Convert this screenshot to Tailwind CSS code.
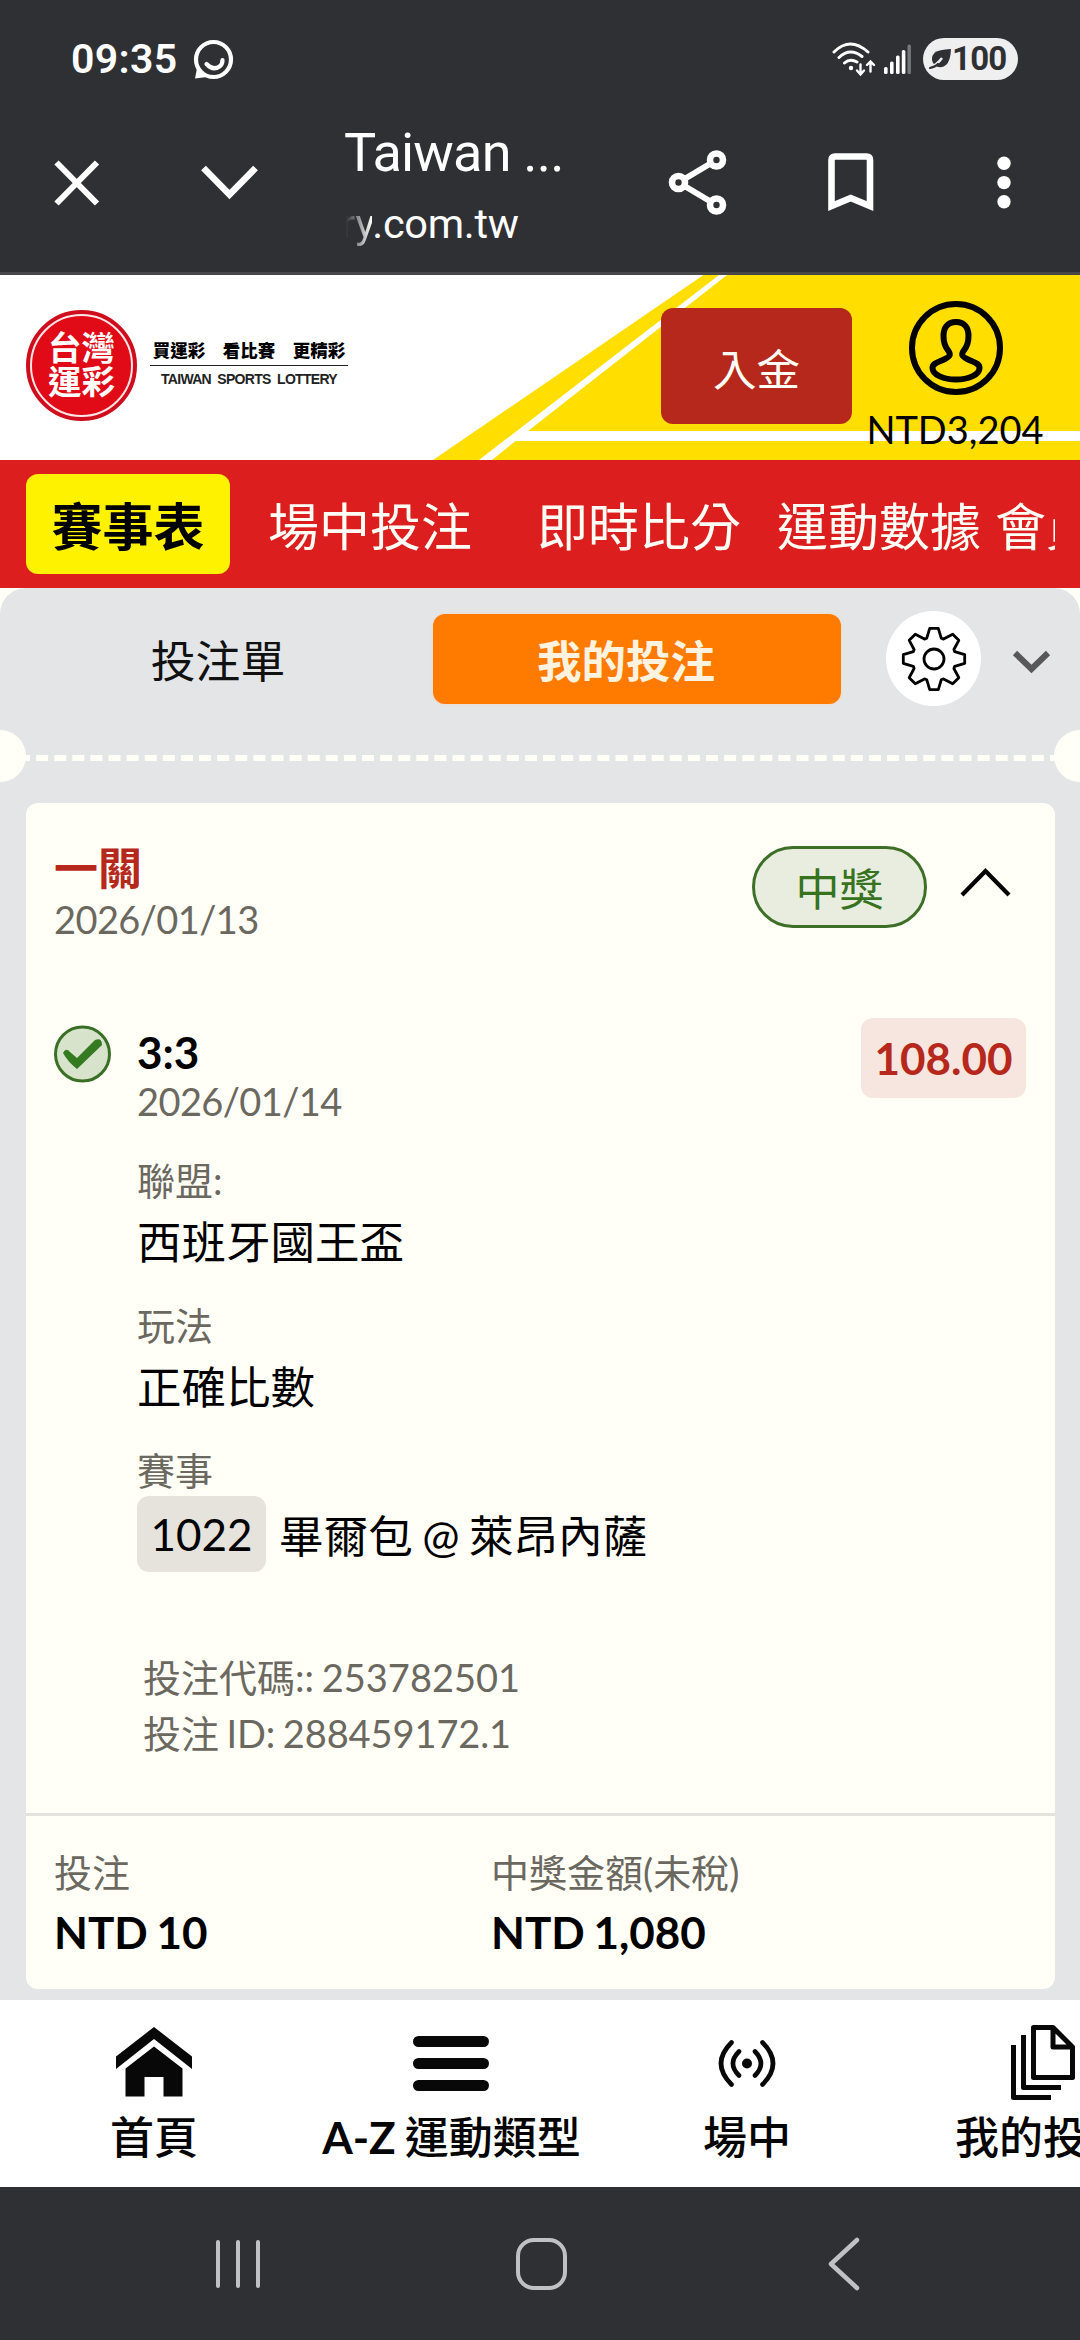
<!DOCTYPE html>
<html lang="zh-Hant">
<head>
<meta charset="utf-8">
<title>台灣運彩</title>
<script src="https://cdn.jsdelivr.net/npm/@tailwindcss/browser@4"></script>
</head>
<body class="w-[1080px] h-[2340px] overflow-hidden flex flex-col bg-[#2f3034] text-black font-['Lato','Noto_Sans_CJK_TC',sans-serif] whitespace-nowrap">

<!-- Status bar -->
<div class="h-[118px] shrink-0 flex items-center pl-[71px] pr-[62px] text-white font-['Roboto',sans-serif]">
  <span class="text-[41px] font-semibold leading-[50px] tracking-[0.300px]">09:35</span>
  <svg class="ml-[16px] mt-[2px]" width="42" height="42" viewBox="0 0 42 42" fill="none" stroke="#fff" stroke-linecap="round"><circle cx="20.500" cy="20.500" r="17.500" stroke-width="4.200"/><path d="M4 29L2 39.500L14 38z" fill="#fff" stroke="none"/><path d="M13.500 25Q20 32 26.500 27.500Q29.500 25.500 29.500 21" stroke-width="4.200"/></svg>
  <div class="ml-auto flex items-center">
    <svg class="mr-[8px]" width="44" height="36" viewBox="0 0 44 36" fill="none" stroke="#fff" stroke-width="3" stroke-linecap="round"><path d="M2 11Q18-5 36 11M7 16.500Q18 6 30 15.500M12.500 22Q18 17 25 21"/><circle cx="19" cy="27" r="2.200" fill="#fff" stroke="none"/><path d="M28.500 23.500V33M25 29.500L28.500 33.500L32 29.500M38.500 30.500V21M35 24L38.500 20.500L42 24" stroke-width="2.400"/></svg>
    <svg class="mr-[11px]" width="28" height="32" viewBox="0 0 28 32" fill="#fff"><rect x="0" y="24" width="3.600" height="7" rx="1.500"/><rect x="6" y="18.500" width="3.600" height="12.500" rx="1.500"/><rect x="12" y="12.500" width="3.600" height="18.500" rx="1.500"/><rect x="17.800" y="7" width="3.600" height="24" rx="1.500"/><rect x="23.500" y="1.500" width="3.400" height="29.500" rx="1.500" fill="#77787b"/></svg>
    <div class="w-[95px] h-[42px] rounded-full bg-[#efeff0] flex items-center pl-[6px] text-[#2f3034]">
      <svg width="23" height="22" viewBox="0 0 23 22"><path d="M22 1Q21.500 13 17 17Q12 21 7 18L4 15Q1 9 6 4.500Q9.500 1.500 22 1z" fill="#2f3034"/><path d="M0 20Q8 17 13 10" fill="none" stroke="#efeff0" stroke-width="2.500"/><path d="M1 20Q7 18.500 9 16" fill="none" stroke="#2f3034" stroke-width="2.200" stroke-linecap="round"/></svg>
      <span class="text-[33px] font-bold leading-[42px] tracking-[-0.800px]">100</span>
    </div>
  </div>
</div>

<!-- Browser toolbar -->
<div class="h-[154px] shrink-0 flex text-white font-['Roboto',sans-serif]">
  <svg class="ml-[53px] mt-[41px]" width="48" height="48" viewBox="0 0 48 48" stroke="#fff" stroke-width="6"><path d="M3.500 3.500L44 44.500M44 3.500L3.500 44.500"/></svg>
  <svg class="ml-[98px] mt-[45px]" width="62" height="40" viewBox="0 0 62 40" fill="none" stroke="#fff" stroke-width="6.600"><path d="M4.500 5L30.500 31.500L56.500 5"/></svg>
  <div class="ml-[83px] w-[220px] h-[154px]">
    <div class="mt-[2px] h-[66px] leading-[66px] text-[54px] tracking-[-0.800px]">Taiwan ...</div>
    <div class="mt-[8px] -ml-[3px] h-[60px] leading-[60px] text-[41.500px] tracking-[-0.300px]"><span class="bg-linear-to-r from-transparent from-[15%] to-white bg-clip-text text-transparent">ry</span>.com.tw</div>
  </div>
  <svg class="ml-[104px] mt-[32px]" width="60" height="66" viewBox="0 0 60 66" fill="none" stroke="#fff" stroke-width="6"><circle cx="10.500" cy="32.500" r="6.500" stroke-width="6.600"/><circle cx="48.500" cy="10" r="6.500" stroke-width="6.600"/><circle cx="48.500" cy="55" r="6.500" stroke-width="6.600"/><path d="M16.500 29L42.500 13.500M16.500 36L42.500 51.500"/></svg>
  <svg class="ml-[100px] mt-[35px]" width="46" height="60" viewBox="0 0 46 60" fill="none" stroke="#fff" stroke-width="6.600"><path d="M3.500 53V7Q3.500 3.500 7 3.500H38.500Q42 3.500 42 7V53L22.700 45z"/></svg>
  <svg class="ml-[123px] mt-[38px]" width="14" height="54" viewBox="0 0 14 54" fill="#fff"><circle cx="7" cy="7.300" r="6.700"/><circle cx="7" cy="26.600" r="6.700"/><circle cx="7" cy="45.800" r="6.700"/></svg>
</div>
<div class="h-[3px] shrink-0 bg-[#48484a]"></div>

<!-- Site header -->
<header class="relative h-[185px] shrink-0 bg-white flex">
  <svg class="absolute inset-0" width="1080" height="185" viewBox="0 275 1080 185" fill="#ffde00"><path d="M703.500 275L433 460H479L719 275zM727 275L528 431H1080V275zM515.500 441L492 460H1080V441z"/></svg>
  <div class="relative ml-[26px] mt-[35px] size-[111px] rounded-full bg-[#e10a17] border-[4px] border-[#d00d1c] flex">
    <div class="size-full rounded-full border-2 border-white/90 pt-[14px] text-center text-white font-bold text-[33.500px] leading-[34px]">台灣<br>運彩</div>
  </div>
  <div class="relative ml-[13px] mt-[63px] w-[198px] text-center">
    <div class="h-[28px] border-b border-[#222] text-[17.500px] leading-[26px] font-black">買運彩　看比賽　更精彩</div>
    <div class="mt-[3px] text-[14px] leading-[20px] font-bold text-[#222] font-['Liberation_Sans'] tracking-[-0.700px]">TAIWAN&nbsp; SPORTS&nbsp; LOTTERY</div>
  </div>
  <div class="relative ml-[313px] mt-[33px] w-[191px] h-[116px] rounded-[12px] bg-[#b6281b] text-[#fffff7] text-center text-[43.500px] leading-[122px]">入金</div>
  <div class="relative ml-[14px] mt-[26px] w-[178px] flex flex-col items-center">
    <svg class="ml-[2px]" width="94" height="94" viewBox="0 0 94 94" fill="none" stroke="#000" stroke-width="6"><circle cx="47" cy="47" r="44"/><path d="M47 21C38 21 34.500 27 34.500 35C34.500 42 36 46 39.500 50C42.500 54 40 56 36 58C29 61.500 23.500 62 23.500 67C23.500 74 35 78.500 47 78.500S70.500 74 70.500 67C70.500 62 65 61.500 58 58C54 56 51.500 54 54.500 50C58 46 59.500 42 59.500 35C59.500 27 56 21 47 21z"/></svg>
    <span class="mt-[11px] text-[38px] leading-[46px]">NTD3,204</span>
  </div>
</header>

<!-- Primary navigation -->
<nav class="h-[128px] shrink-0 bg-[#dc1e1e] pt-[14px] pl-[26px] text-[51px] leading-[106px] text-[#fffff7]">
  <div class="w-[1029px] h-[100px] flex items-start overflow-hidden">
    <span class="shrink-0 w-[204px] h-[100px] rounded-[12px] bg-[#fff200] text-black font-bold text-center">賽事表</span>
    <span class="shrink-0 ml-[38px]">場中投注</span>
    <span class="shrink-0 ml-[65px]">即時比分</span>
    <span class="shrink-0 ml-[36px]">運動數據</span>
    <span class="shrink-0 ml-[14px]">會員</span>
  </div>
</nav>

<!-- Bet slip panel -->
<main class="h-[1412px] shrink-0 bg-[#fffff7] overflow-hidden">
  <div class="h-full rounded-t-[26px] bg-[#e4e5e7]">
    <div class="h-[142px] flex pt-[24px]">
      <div class="ml-[26px] w-[407px] pr-[23px] mt-[4px] text-center text-[44.800px] leading-[90px] text-[#111]">投注單</div>
      <div class="mt-[2px] w-[408px] h-[90px] pr-[22px] rounded-[12px] bg-[#ff7b00] text-[#fff3e0] text-center font-bold text-[44.500px] leading-[94px] shadow-[0_0_3px_#f5d9bd]">我的投注</div>
      <div class="ml-[45px] -mt-px size-[95px] rounded-full bg-white flex items-center justify-center">
        <svg width="68" height="68" viewBox="-34 -34 68 68" fill="none" stroke="#000" stroke-width="2.800" stroke-linejoin="round"><circle r="10"/><path id="gear" d=""/></svg>
      </div>
      <svg class="ml-[31px] mt-[36px]" width="40" height="28" viewBox="0 0 40 28" fill="none" stroke="#58585a" stroke-width="6"><path d="M3 5L19.500 21L36 5"/></svg>
    </div>
    <div class="relative h-[52px]">
      <div class="mx-[18px] h-[31px] border-b-[6px] border-dashed border-[#fffff7]"></div>
      <div class="absolute -left-[26px] top-0 size-[52px] rounded-full bg-[#fffff7]"></div>
      <div class="absolute -right-[26px] top-0 size-[52px] rounded-full bg-[#fffff7]"></div>
    </div>

    <article class="mt-[21px] mx-[26px] w-[1029px] h-[1186px] rounded-[12px] bg-[#fffff7] text-[38px] text-[#6b6860] [word-spacing:-2px]">
      <div class="flex pt-[39px] pl-[28px]">
        <div class="w-[698px]">
          <div class="text-[44px] leading-[52px] font-bold text-[#b6281b]">一關</div>
          <div class="leading-[50px] tracking-[-0.600px]">2026/01/13</div>
        </div>
        <div class="mt-[4px] w-[175px] h-[82px] rounded-full border-[3px] border-[#3d6f28] bg-[#e9eddf] text-[#37731f] text-center text-[44px] leading-[80px]">中獎</div>
        <svg class="ml-[32px] mt-[24px]" width="54" height="34" viewBox="0 0 54 34" fill="none" stroke="#000" stroke-width="4.200"><path d="M3 29L26.500 5L50 29"/></svg>
      </div>

      <div class="mt-[81px] flex pl-[28px]">
        <svg class="shrink-0" width="57" height="58" viewBox="0 0 57 58"><circle cx="28.500" cy="29" r="27" fill="#d7e3cb" stroke="#3a7026" stroke-width="3"/><path d="M9 28Q12 22 16 27L23 33L41 15Q48 12 48 20L23 44Q14 37 9 28z" fill="#347a20"/></svg>
        <div class="ml-[26px] w-[724px] mt-[1px]">
          <div class="text-[44px] leading-[52px] font-bold text-black">3:3</div>
          <div class="leading-[46px] tracking-[-0.600px]">2026/01/14</div>
          <div class="mt-[33px] leading-[46px]">聯盟:</div>
          <div class="mt-[13px] text-[44.500px] leading-[52px] text-black">西班牙國王盃</div>
          <div class="mt-[34px] leading-[46px]">玩法</div>
          <div class="mt-[13px] text-[44.500px] leading-[52px] text-black">正確比數</div>
          <div class="mt-[34px] leading-[46px]">賽事</div>
          <div class="mt-[3px] flex items-start text-[44.600px] leading-[76px] text-black">
            <span class="w-[129px] h-[76px] rounded-[12px] bg-[#e5e3dc] text-[44px] text-center">1022</span>
            <span class="ml-[13px] mt-[2px]">畢爾包 @ 萊昂內薩</span>
          </div>
          <div class="mt-[75px] ml-[6px] leading-[56px]">
            <div>投注代碼:: 253782501</div>
            <div class="tracking-[-0.100px]">投注 ID: 288459172.1</div>
          </div>
        </div>
        <div class="-mt-[7px] w-[165px] h-[80px] rounded-[12px] bg-[#f6e6df] text-[#b6281b] font-bold text-center text-[44px] leading-[80px]">108.00</div>
      </div>

      <div class="mt-[52px] border-t-[3px] border-[#e3e2dc] flex pt-[33px] pl-[28px]">
        <div class="w-[437px]">
          <div class="leading-[46px]">投注</div>
          <div class="mt-[11px] text-[44px] leading-[52px] font-bold text-black">NTD 10</div>
        </div>
        <div>
          <div class="leading-[46px]">中獎金額(未稅)</div>
          <div class="mt-[11px] text-[44px] leading-[52px] font-bold text-black">NTD 1,080</div>
        </div>
      </div>
    </article>
  </div>
</main>

<!-- Bottom tabs -->
<nav class="h-[187px] shrink-0 bg-white flex overflow-hidden text-[44px] leading-[56px] font-medium text-[#050505] [word-spacing:-2px]">
  <div class="w-[308px] shrink-0 flex flex-col items-center pt-[25px]">
    <svg width="76" height="76" viewBox="0 0 76 76" fill="#080808"><path d="M38 2L76 31.500V44L38 14L0 44V31.500zM38 21.500L66.500 43.500V71.500H47.500V52H28.500V71.500H9.500V43.500z"/></svg>
    <span class="mt-[8px]">首頁</span>
  </div>
  <div class="w-[286px] shrink-0 flex flex-col items-center pt-[25px]">
    <svg width="76" height="76" viewBox="0 0 76 76" fill="#080808"><rect y="11" width="76" height="11" rx="5.500"/><rect y="33" width="76" height="11" rx="5.500"/><rect y="55" width="76" height="11" rx="5.500"/></svg>
    <span class="mt-[8px] ml-px"><b>A-Z</b> 運動類型</span>
  </div>
  <div class="w-[306px] shrink-0 flex flex-col items-center pt-[25px]">
    <svg width="76" height="76" viewBox="0 0 76 76" fill="none" stroke="#080808" stroke-width="4.600" stroke-linecap="round"><circle cx="38" cy="38.500" r="5" fill="#080808" stroke="none"/><path d="M30 26.500Q18 38.500 30 50.500M46 26.500Q58 38.500 46 50.500M22.500 17.500Q1.500 38.500 22.500 59.500M53.500 17.500Q74.500 38.500 53.500 59.500"/></svg>
    <span class="mt-[8px]">場中</span>
  </div>
  <div class="w-[286px] shrink-0 flex flex-col items-center pt-[25px]">
    <svg width="64" height="76" viewBox="0 0 64 76" fill="none" stroke="#080808" stroke-width="5"><path d="M22.500 2.500H42L61.500 22V52.500H22.500zM42 2.500V22H61.500M12.500 10V62.500H50M2.500 20V72.500H40" stroke-linejoin="round"/></svg>
    <span class="mt-[8px]">我的投注</span>
  </div>
</nav>

<!-- System navigation -->
<div class="h-[153px] shrink-0 flex items-center justify-between pl-[215px] pr-[219px]">
  <svg width="46" height="50" viewBox="0 0 46 50" stroke="#c0c1c5" stroke-width="4" stroke-linecap="round"><path d="M3 3V47M23 3V47M43 3V47"/></svg>
  <div class="-ml-[6px] w-[51px] h-[52px] rounded-[18px] border-[4.500px] border-[#c0c1c5]"></div>
  <svg width="34" height="54" viewBox="0 0 34 54" fill="none" stroke="#c0c1c5" stroke-width="4.500" stroke-linecap="round" stroke-linejoin="round"><path d="M30 3L4 27L30 51"/></svg>
</div>

<script>
// Eight-toothed cog outline
(function () {
  var d = "";
  var pts = [[22, -19.5], [31, -8], [31, 8], [22, 19.5]];
  for (var i = 0; i < 8; i++) {
    var a = i * Math.PI / 4;
    pts.forEach(function (p) {
      var t = a + p[1] * Math.PI / 180;
      d += (d ? "L" : "M") + (p[0] * Math.cos(t)).toFixed(1) + " " + (p[0] * Math.sin(t)).toFixed(1);
    });
  }
  document.getElementById("gear").setAttribute("d", d + "z");
})();
</script>
</body>
</html>
